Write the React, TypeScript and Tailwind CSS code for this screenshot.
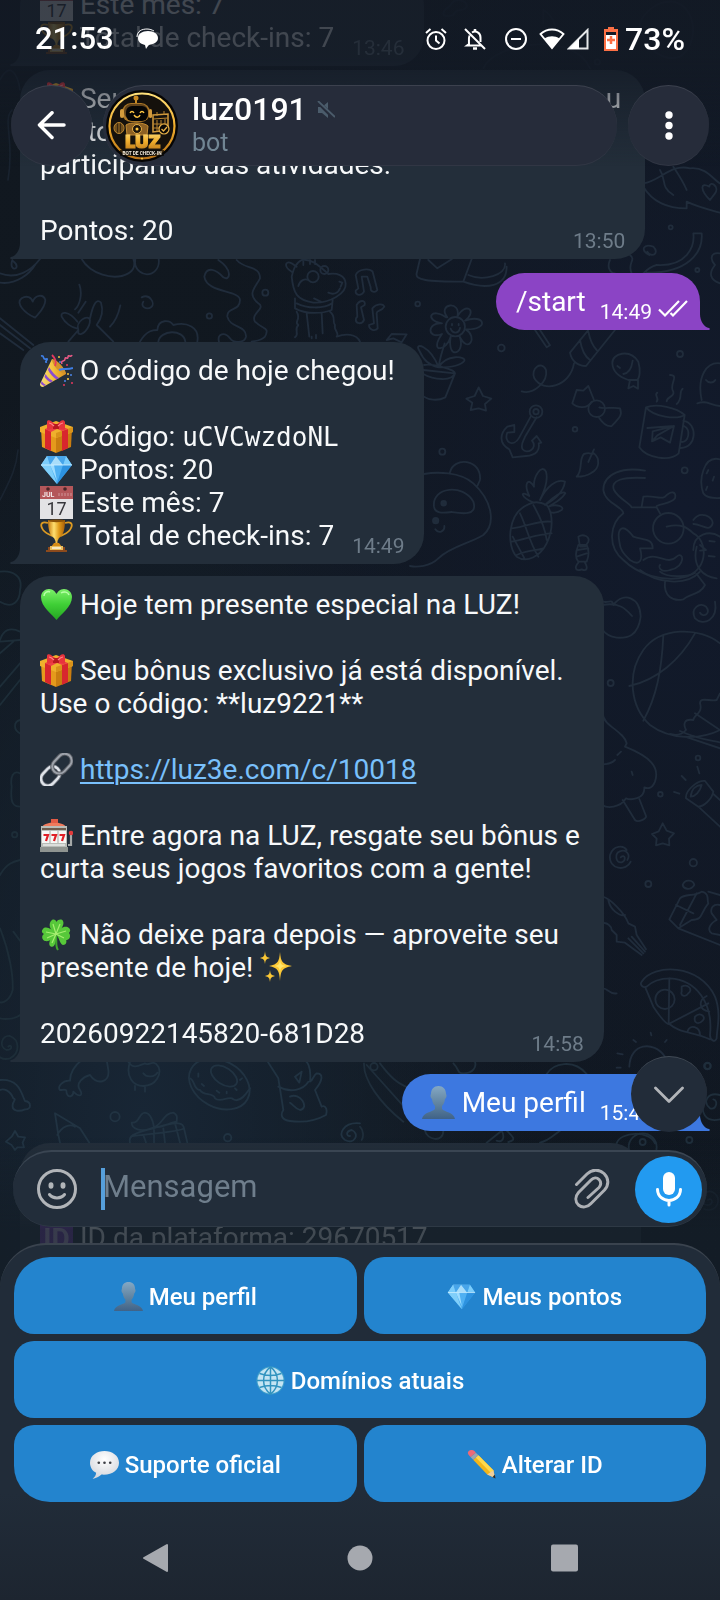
import type { ReactNode } from "react";

/* ---------- emoji drawings, all on a 33 x 33 grid ---------- */

type EmojiName =
  | "party" | "gift" | "gem" | "calendar" | "trophy" | "heart" | "link" | "slot"
  | "clover" | "sparkles" | "bust" | "globe" | "speech" | "pencil" | "id";

const drawings: Record<EmojiName, ReactNode> = {
  party: (
    <>
      <defs>
        <linearGradient id="pa" x1="0" x2="1"><stop offset="0" stopColor="#f9dc7c" /><stop offset=".5" stopColor="#f3c23c" /><stop offset="1" stopColor="#d98d1f" /></linearGradient>
      </defs>
      <path d="M12 5C18 7 25 14 26 20L3 33C1 33 0 32 0 30Z" fill="url(#pa)" />
      <path d="M9 13C12 18 16 22 19 24L16.500 25.500C13 23 10 20 8 16ZM5.500 20C8 24 11 26 13 27L10.500 28.500C8 27 6 25 4.500 23ZM1.500 27C3 29 4.500 30 6 31L4 32L1 30Z" fill="#8a4bd0" />
      <path d="M12 5C18 7 25 14 26 20C21 20 12 12 12 5Z" fill="#d3932a" />
      <path d="M15 12C17 8 15 4 12 1" fill="none" stroke="#e6395f" strokeWidth="1.800" />
      <path d="M19 16C23 14 28 16 33 14" fill="none" stroke="#3f7fe6" strokeWidth="2" />
      <path d="M1 2C5 1 2 6 6 5S3 9 7 8" fill="none" stroke="#3f7fe6" strokeWidth="1.600" />
      <path d="M22 10C20 6 25 8 25 5S28 6 28 3S31 4 32 1" fill="none" stroke="#e85a86" strokeWidth="1.600" />
      <g fill="#e6395f"><circle cx="27" cy="11" r="1" /><circle cx="32" cy="29" r="1" /><circle cx="24" cy="31" r="1" /></g>
      <g fill="#f3c23c"><circle cx="19" cy="3" r="1" /><circle cx="28" cy="20" r="1" /><circle cx="28" cy="25" r="1.100" /></g>
      <g fill="#4c86e8"><circle cx="20" cy="8" r=".9" /><circle cx="31" cy="21" r="1" /><circle cx="25" cy="27" r="1" /></g>
    </>
  ),
  gift: (
    <>
      <path d="M1 8L16 14V33L2 27Z" fill="#e59a1c" />
      <path d="M32 8L16 14V33L31 27Z" fill="#c97d10" />
      <path d="M0 7L16 1L33 7V12L16 18L0 12Z" fill="#efb02c" />
      <path d="M16 13L33 7V12L16 18Z" fill="#d8921a" />
      <path d="M5 9L11 11V31L5 28ZM22 11L28 9V28L22 31Z" fill="#d8262e" />
      <path d="M5 9L20 3L25 5L11 12ZM8 5L13 3L28 9L22 11Z" fill="#ee3f45" />
      <path d="M16 6C12 0 7 -1 7 2V9C8 11 13 8 16 7C19 8 24 11 25 9V2C24 -1 20 0 16 6Z" fill="#e8343c" />
      <path d="M13 4H19V9H13Z" fill="#b81820" />
      <path d="M9 3C11 3 13 5 14 6M23 3C21 3 19 5 18 6" stroke="#ff8587" fill="none" strokeWidth="1.200" />
    </>
  ),
  gem: (
    <>
      <defs><linearGradient id="ge" x1="0" y1="0" x2="1" y2="1"><stop offset="0" stopColor="#a9e2ff" /><stop offset=".5" stopColor="#4cb6f5" /><stop offset="1" stopColor="#1577cf" /></linearGradient></defs>
      <path d="M7 3H26L32 12L17 31L1 12Z" fill="url(#ge)" />
      <path d="M7 3L10 12H1ZM26 3L23 12H32Z" fill="#7ccdfb" />
      <path d="M10 12L16 3L23 12Z" fill="#a9ddfa" />
      <path d="M7 3H16L10 12ZM26 3H16L23 12Z" fill="#48a5ea" />
      <path d="M10 12H23L17 31Z" fill="#4fb0f2" />
      <path d="M10 12L14 12L17 28Z" fill="#9ddcff" />
      <path d="M1 12L10 12L17 31Z" fill="#80cffa" />
      <path d="M23 12H32L17 31Z" fill="#2d92e0" />
      <path d="M1 12H32" stroke="#d7f3ff" strokeWidth=".8" />
    </>
  ),
  calendar: (
    <>
      <path d="M0 0H33V33H0Z" fill="#e3e3e5" />
      <path d="M0 0H33V13H0Z" fill="#b4575a" />
      <circle cx="8" cy="3" r="1.800" fill="#4a2528" /><circle cx="25" cy="3" r="1.800" fill="#4a2528" />
      <text x="2" y="11" fontSize="7" fontWeight="700" fill="#f3e8e8" fontFamily="Roboto, sans-serif">JUL</text>
      <path d="M19 10V7M22 10V7M25 10V7M28 10V7M31 10V7" stroke="#d09698" strokeWidth="1" />
      <text x="16.500" y="29" fontSize="18" textAnchor="middle" fill="#36363a" fontFamily="Roboto, sans-serif">17</text>
    </>
  ),
  trophy: (
    <>
      <defs><linearGradient id="tr"><stop offset="0" stopColor="#c77a10" /><stop offset=".35" stopColor="#ffdf70" /><stop offset=".65" stopColor="#e09a1a" /><stop offset="1" stopColor="#a85e08" /></linearGradient></defs>
      <path d="M8 4C2 2 0 5 2 9C4 14 9 15 12 17M25 4C31 2 33 5 31 9C29 14 24 15 21 17" fill="none" stroke="#dc9a22" strokeWidth="1.800" />
      <path d="M8 1H25C25 11 23 17 19 19L17.500 22V26H15.500V22L14 19C10 17 8 11 8 1Z" fill="url(#tr)" />
      <ellipse cx="16.500" cy="1.800" rx="8.500" ry="1.400" fill="#8b5208" />
      <path d="M14 24H19L22 28H11Z" fill="#d58b16" />
      <path d="M8 28H25V31H27V33H6V31H8Z" fill="#8c4a1c" />
      <path d="M10 27H23V31H10Z" fill="#e9bd5c" /><path d="M12 28H21V30H12Z" fill="#f6e6bd" />
    </>
  ),
  heart: (
    <>
      <defs><linearGradient id="he" x1="0" y1="0" x2="0" y2="1"><stop offset="0" stopColor="#7df06a" /><stop offset=".5" stopColor="#3fcf36" /><stop offset="1" stopColor="#24a522" /></linearGradient></defs>
      <path d="M16.500 32C12 26 1 19 1 9C1 4 5 1 9 1C13 1 15.500 4 16.500 6C17.500 4 20 1 24 1C28 1 32 4 32 9C32 19 21 26 16.500 32Z" fill="url(#he)" />
      <path d="M4 8C4 4 8 3 10 4M21 5C24 3 28 4 29 7" stroke="#b8ffa8" strokeWidth="1.500" fill="none" />
    </>
  ),
  link: (
    <g fill="none" transform="rotate(-47 16.500 16.500)">
      <rect x="-3" y="9.500" width="21" height="14" rx="7" stroke="#6d737c" strokeWidth="4" />
      <rect x="-3" y="9.500" width="21" height="14" rx="7" stroke="#e0e4ea" strokeWidth="2.400" />
      <rect x="13.500" y="9.500" width="22" height="14" rx="7" stroke="#54585f" strokeWidth="4" />
      <rect x="13.500" y="9.500" width="22" height="14" rx="7" stroke="#9da2aa" strokeWidth="2" />
    </g>
  ),
  slot: (
    <>
      <path d="M2 8C5 2 23 2 26 8Z" fill="#ef7a5c" />
      <path d="M11 0H18V4H11Z" fill="#e25b45" />
      <path d="M1 7H27V29H1Z" fill="#b9bdb8" />
      <path d="M0 28H28V33H0Z" fill="#8f9490" />
      <path d="M2 9H26V11H2Z" fill="#6d5b4c" />
      <path d="M2 12H26V24H2Z" fill="#f6f6f4" />
      <path d="M10 12V24M18 12V24" stroke="#a9a9a5" />
      <path d="M3.500 16H8L6 22M11.500 16H16L14 22M19.500 16H24L22 22" stroke="#e01f26" strokeWidth="2.200" fill="none" />
      <path d="M3 26H25" stroke="#e9ebe8" strokeWidth="1.500" />
      <path d="M28 26H31V14" stroke="#a5a9a8" strokeWidth="2.200" fill="none" />
      <circle cx="31" cy="14" r="2.300" fill="#e23b3b" />
    </>
  ),
  clover: (
    <>
      <path d="M16 16C17 22 15 28 18 32" stroke="#3ea52c" strokeWidth="2" fill="none" />
      <g fill="#57c83a">
        <path d="M16 16C9 12 8 5 12 2C14 1 16 2 16.500 4C18 1 22 1 23 3C25 7 20 13 16 16Z" />
        <path d="M16 16C20 9 26 7 29 10C31 12 30 14 29 15C31 18 30 21 27 22C23 23 18 20 16 16Z" />
        <path d="M16 16C12 10 5 8 3 11C1 13 2 15 4 16C1 18 2 22 5 23C10 24 14 20 16 16Z" />
        <path d="M16 16C10 19 8 26 10 28C13 30 14 28 15 26C16 23 16 19 16 16ZM17 17C19 20 20 26 23 27C26 27 27 24 26 22C24 19 20 18 17 17Z" />
      </g>
      <path d="M16 16L13 6M16 16L20 6M16 16L26 13M16 16L6 14M16 16L7 20M16 16L12 25M16 16L24 20" stroke="#a5ee70" strokeWidth="1.200" />
    </>
  ),
  sparkles: (
    <g fill="#fbc735">
      <path d="M20 1C21 11 22 13 32 15C22 17 21 19 20 30C19 19 18 17 9 15C18 13 19 11 20 1Z" />
      <path d="M5 0C5.500 5 6 6 10 7C6 8 5.500 9 5 13C4.500 9 4 8 0 7C4 6 4.500 5 5 0ZM10 19C10.500 23 11 24 15 25C11 26 10.500 27 10 31C9.500 27 9 26 5 25C9 24 9.500 23 10 19Z" />
      <path d="M20 8C20.500 13 21 14 26 15C21 16 20.500 17 20 22C19.500 17 19 16 15 15C19 14 19.500 13 20 8Z" fill="#ffe66b" />
    </g>
  ),
  bust: (
    <>
      <defs><linearGradient id="bu" x1="0" y1="0" x2="0" y2="1"><stop offset="0" stopColor="#84a8c4" /><stop offset=".6" stopColor="#5c7f9c" /><stop offset="1" stopColor="#3f6288" /></linearGradient></defs>
      <path d="M16.500 0C12 0 9 3 9 8C8 9 8.500 12 10 13C10.500 17 12 19 13 20V23C11 26 1 26 0 33H33C32 26 22 26 20 23V20C21 19 22.500 17 23 13C24.500 12 25 9 24 8C24 3 21 0 16.500 0Z" fill="url(#bu)" />
    </>
  ),
  globe: (
    <>
      <circle cx="16.500" cy="16.500" r="16" fill="#3f9fca" />
      <circle cx="16.500" cy="16.500" r="14.800" fill="#c3e4f3" />
      <path d="M16.500 1V32M1 16.500H32M4 8.500Q16.500 13 29 8.500M4 24.500Q16.500 20 29 24.500M16.500 1C6 9 6 24 16.500 32C27 24 27 9 16.500 1" fill="none" stroke="#3193bf" strokeWidth="1.700" />
    </>
  ),
  speech: (
    <>
      <defs><radialGradient id="sp" cx=".5" cy=".3" r=".7"><stop offset="0" stopColor="#fff" /><stop offset="1" stopColor="#d3d6dc" /></radialGradient></defs>
      <path d="M16.500 1C8 1 0 6 0 14.500C0 20 3 24 7 26C7 29 5 31 3 33C8 32 11 30 13 28C25 29 33 23 33 14.500C33 6 25 1 16.500 1Z" fill="url(#sp)" />
      <g fill="#3d3f45"><circle cx="10" cy="14.500" r="1.500" /><circle cx="16.500" cy="14.500" r="1.500" /><circle cx="23" cy="14.500" r="1.500" /></g>
    </>
  ),
  pencil: (
    <>
      <path d="M7 11L13 6L30 23L32 32L23 28Z" fill="#f2b61c" />
      <path d="M10 8.500L13 6L30 23L27 26Z" fill="#ffd94e" />
      <path d="M23 28L30 23L32 32Z" fill="#efcf9d" />
      <path d="M29 31L31.500 28L32.500 32.500Z" fill="#2c2c2e" />
      <path d="M4 8L10 3L13 6L7 11Z" fill="#9fa4ab" />
      <path d="M4 8C1 5 0 3 2 1C5 -1 8 0 10 3Z" fill="#ec6a78" />
    </>
  ),
  id: (
    <>
      <rect width="33" height="33" rx="4" fill="#7b3fb4" />
      <text x="16.500" y="27" fontSize="28" fontWeight="700" textAnchor="middle" fill="#c5aedb" fontFamily="Roboto, sans-serif">ID</text>
    </>
  ),
};

function Emoji({ name, small = false }: { name: EmojiName; small?: boolean }) {
  return (
    <svg viewBox="0 0 33 33" aria-hidden="true" className={small ? "inline-block size-[29px] shrink-0" : "inline-block size-[33px] align-top"}>
      {drawings[name]}
    </svg>
  );
}

/* ---------- wallpaper ---------- */

const star = "M0 -12L4 -4L12 -3L6 3L8 11L0 7L-8 11L-6 3L-12 -3L-4 -4Z";
const swirl = "M0 0C4 -3 6 3 1 5C-5 6 -8 -1 -4 -6C2 -12 11 -6 10 2C9 8 3 12 -4 9";

function Wallpaper() {
  return (
    <svg
      viewBox="0 0 720 1600"
      preserveAspectRatio="xMidYMin slice"
      aria-hidden="true"
      className="h-full w-full text-[#202c3b] [grid-area:1/1]"
      fill="none"
      stroke="currentColor"
      strokeLinecap="round"
      strokeLinejoin="round"
      strokeWidth="5.500"
    >
      <g transform="translate(410 320) scale(.33333)">
        <path d="M112 -8C80 -50 155 -60 142 -10C165 -55 205 -30 165 2C225 -20 240 30 167 28C205 50 175 105 148 48C170 100 110 125 122 50C110 95 55 100 96 42C50 60 50 5 96 10C40 0 65 -40 108 -8" />
        <circle cx="136" cy="20" r="29" /><path d="M122 26C128 42 146 42 150 24M126 12V16M146 12V16" />
        <path d="M104 70C95 100 88 120 86 142M86 142C60 75 10 65 28 92C40 120 60 138 86 142C110 100 170 110 163 122C150 140 110 142 86 142M40 150L135 160L106 232C80 245 55 238 42 230M42 135C70 130 140 150 134 160C128 185 70 180 40 162" />
        <path d="M206 202L219 228L244 236L225 252L228 272L206 265L182 270L187 248L169 236L194 228Z" />
        <circle cx="274" cy="84" r="10" /><circle cx="97" cy="395" r="9" /><circle cx="495" cy="328" r="7" /><circle cx="824" cy="451" r="9" /><circle cx="810" cy="102" r="9" />
        <path d="M375 30L410 82L420 76L390 30M535 30L480 98C485 125 505 138 528 138L615 30M510 60C515 90 525 110 540 120M535 35C540 60 550 80 560 90M492 130C480 200 400 220 373 175C360 145 395 120 408 150C415 185 370 225 335 214" />
        <path d="M607 130C605 100 660 85 685 125C692 150 690 175 680 180H655C625 170 608 155 607 130ZM668 122C665 145 655 160 640 162M660 180L655 205L670 198L684 206V180M622 138L630 144" />
        <path d="M545 245C530 270 500 262 487 250L500 210L520 212L535 198L552 240M568 262C580 268 610 260 630 265C640 290 620 300 605 318C590 322 575 305 565 290" /><circle cx="560" cy="266" r="25" />
        <circle cx="378" cy="275" r="19" /><circle cx="378" cy="275" r="8" />
        <path d="M362 290L328 352C310 385 280 365 292 338L313 336V315L292 320C270 340 265 370 298 388L308 412L348 408C380 405 390 390 386 370L394 368L380 348L366 362C385 385 350 405 338 388C330 375 340 365 345 350L380 292" />
        <path d="M708 262L688 382C710 415 780 425 806 400L824 285C800 262 740 250 708 262C730 290 800 300 824 285M820 302C865 310 860 385 812 384M822 318C845 330 835 365 816 366M712 324L792 318L780 368L752 352L726 364L728 334L792 318L742 346L726 364M742 218C730 225 750 235 740 245M780 165C810 165 775 195 790 215C795 230 770 230 770 244M818 206C805 215 820 235 800 252" />
        <path d="M500 470C520 450 505 420 522 402C545 395 540 405 552 400C570 415 570 445 545 458C530 468 520 470 500 470ZM552 388L535 426" />
        <path d="M42 462C80 455 150 455 190 490C245 540 260 610 220 645C180 670 120 680 85 715C60 740 20 742 0 738M120 457C130 410 215 415 210 480L202 498M72 560C65 500 160 490 190 545C205 590 150 580 125 576C95 580 75 580 72 560ZM76 628C85 642 105 635 103 618" />
        <circle cx="101" cy="550" r="7" fill="currentColor" /><circle cx="77" cy="602" r="8" fill="currentColor" />
        <path d="M355 553C290 580 290 680 320 710C350 730 390 710 410 670C430 630 430 580 410 555C390 545 370 545 355 553ZM305 625C350 620 390 600 422 605M305 665C340 660 390 640 425 640M320 705C350 690 390 690 400 685M330 580C350 620 355 660 385 710M370 555C390 590 405 620 410 660M308 650L345 718M370 548C330 530 330 510 358 528C340 490 355 470 372 500C370 470 395 430 408 455C415 480 405 510 390 540C410 500 440 475 465 485C460 520 430 540 405 555C430 530 460 510 466 520C450 545 430 550 415 560C440 550 465 560 455 570C440 580 425 580 420 575" />
        <path d="M505 650C520 640 540 650 535 665L525 680H510ZM505 675C495 700 495 715 505 725H530C540 700 535 685 530 675ZM502 690L535 685M500 710L530 700M505 728C490 745 500 755 515 748C530 755 535 745 525 728" />
        <path d="M705 452C640 440 580 460 580 510C585 550 640 560 640 580C600 610 590 680 640 720C680 760 760 790 830 770C900 740 890 660 850 640C830 620 810 610 770 620M705 474C640 470 600 480 612 510C625 535 660 550 665 562H740L750 580M695 560L700 530C730 525 750 540 765 530C785 510 800 515 795 535C785 550 760 550 740 558M628 665C620 620 640 610 670 650C700 660 730 655 728 685H690C700 720 690 740 660 720C640 700 630 690 628 665ZM700 720C740 690 770 740 800 710C820 690 830 740 780 750C750 760 745 740 750 735" />
        <circle cx="775" cy="625" r="46" />
        <path d="M875 240C860 170 890 125 930 130M888 180C895 190 910 190 916 180M862 250C890 240 900 255 930 258M930 418C880 405 865 480 880 520C890 535 910 535 930 534M895 450L890 460M912 470L908 482M892 500L888 510" />
        <path d="M850 690C850 640 900 630 930 650M860 680C845 740 880 770 920 775M870 675L888 690L870 692M898 663L914 665M896 708L914 710M850 600C870 570 910 590 908 610C900 640 870 610 850 612" />
      </g>
      <g transform="translate(0 250) scale(.33333)">
        <path d="M105 203C75 190 45 160 65 145C80 135 95 142 98 155C105 135 130 130 136 150C136 175 115 190 105 203ZM238 104C248 130 240 165 225 178M257 155L235 188M361 166C355 195 345 215 330 230M0 70C50 90 95 60 120 27M0 98C50 105 90 70 105 45M245 27C270 70 340 95 385 70C405 60 405 40 400 27M406 27C400 60 430 80 455 70C475 60 478 40 476 27M37 30C30 50 40 60 48 54C54 46 45 38 40 34M0 205L100 285M0 225L90 295M0 250L70 300M425 142C450 130 465 160 455 170C440 182 420 170 430 155" />
        <path d="M232 215C205 180 180 185 185 200C195 220 215 232 230 235M270 205C280 160 290 145 303 158C310 180 305 205 290 225L340 275M235 240C225 215 265 190 270 210C270 235 245 260 235 250ZM235 240L205 275" />
        <path d="M655 30C700 60 690 95 670 82C650 60 620 45 613 80C620 130 720 120 720 150C720 185 680 170 682 200C690 235 740 225 738 260C735 280 700 280 690 265C675 245 650 250 657 275M710 30C735 60 780 45 780 85C765 115 740 130 775 160C800 175 750 190 765 215C790 240 810 230 795 260C780 275 765 272 755 275M420 275C440 240 460 240 472 240C475 205 510 210 520 225C560 215 600 230 592 275M475 275C480 240 550 235 556 275" />
        <circle cx="628" cy="198" r="8" /><circle cx="796" cy="128" r="9" /><circle cx="1253" cy="162" r="7" />
        <path d="M875 80C880 130 890 150 940 158C990 160 1040 130 1037 100C1035 75 1010 68 985 72C950 40 930 25 905 30C885 40 880 60 875 80ZM875 65C850 50 855 30 875 40L890 50M885 145V175C920 195 970 190 995 180L998 150M890 160C920 175 970 178 996 160M890 185C905 210 880 215 895 225C880 240 900 250 885 262M990 185C1010 200 995 215 1005 225C1000 240 1020 250 1010 260C1035 250 1070 250 1080 275M920 190L928 260M965 190L968 250M895 108C900 90 915 85 925 90M985 128C1000 135 1015 130 1020 115M1018 95L1027 98L1022 110M942 145L962 155M935 260V265M948 255V265M910 30V45M930 30V42M945 30V42" />
        <circle cx="939" cy="80" r="17" /><circle cx="973" cy="60" r="12" />
        <path d="M1075 115L1067 75C1075 55 1110 55 1118 65L1132 120C1125 130 1110 125 1112 112L1102 80H1085L1092 125C1085 138 1065 138 1067 122ZM1072 200L1070 165C1080 148 1098 150 1094 165L1083 172L1092 210C1085 225 1065 222 1068 205ZM1122 220L1117 175C1130 160 1150 160 1153 170C1145 185 1130 180 1130 190L1133 235C1125 245 1107 240 1107 225Z" />
        <path d="M1160 270L1175 252L1220 253L1205 277L1180 265Z" />
      </g>
      <g transform="translate(360 0) scale(.33333)">
        <path d="M180 777L170 820C165 840 200 845 310 845L335 777M205 780L232 805L275 778M325 825C370 845 440 825 435 790M310 845C380 870 440 860 440 800M750 780C740 800 750 820 765 820M810 765C830 780 800 790 815 820M868 765C840 750 850 730 880 740C900 760 875 775 862 755M1000 700H1025C1030 760 980 820 860 818M1000 700C1005 740 980 800 890 795C870 800 860 810 850 820" />
        <path d="M850 550C900 545 930 490 990 505C1040 500 1060 540 1080 550M850 560C880 610 930 625 980 625V605C1010 620 1050 630 1080 638M900 510C920 540 900 560 940 585M940 500C960 530 970 545 980 570M1050 600C1020 570 1020 545 1048 560C1050 540 1080 560 1065 580Z" />
        <path d="M250 40C255 20 270 25 275 10C290 -10 325 5 320 20C310 40 290 20 280 45C265 50 250 50 250 40ZM550 70V30C570 40 580 60 585 75M370 205C400 130 640 90 690 205M840 70C850 40 890 0 940 5C1010 20 1020 130 960 170C900 190 845 130 840 70Z" opacity=".5" />
        <path d="M1080 760C1050 755 1050 780 1065 795C1045 820 1050 840 1080 850" />
        <circle cx="932" cy="682" r="6" /><circle cx="1012" cy="810" r="6" /><circle cx="712" cy="186" r="8" opacity=".5" />
      </g>
      <g transform="translate(600 570) scale(.33333)">
        <path d="M120 0C170 40 260 50 300 5M195 35C190 80 220 95 250 88C270 70 300 75 315 45L290 12M180 5C200 25 270 20 285 8M8 95C30 100 35 85 40 105C70 65 120 80 122 140C115 200 80 205 50 203C30 200 15 190 8 180M8 105C60 95 80 120 96 138M345 95C355 150 310 170 285 145C270 115 300 95 318 110C335 130 310 145 300 128" />
        <path d="M360 220C300 170 180 170 130 240C80 310 90 410 150 465C210 510 300 510 360 480M190 197C185 300 170 380 130 452M285 190C240 270 170 330 88 348M240 483C300 510 330 510 360 517M360 370L350 390C330 395 300 380 300 400C310 430 280 435 280 450C250 445 250 465 258 480C240 500 220 495 210 492M285 430L360 480M255 500L360 535" />
        <path d="M8 430C10 470 70 480 80 520L75 530C150 560 180 590 165 635C155 660 140 655 133 652C135 690 90 690 78 685C60 715 20 715 8 705M8 583C25 583 35 580 45 570M52 555L63 545M95 605L98 615M68 690L105 750C115 760 140 745 138 738L118 687" />
        <path d="M258 685C255 660 295 630 315 633L340 665C335 690 310 710 295 710ZM272 680C275 655 290 645 305 645C300 665 285 680 272 680ZM295 710L360 770M340 672L360 690M292 590L298 610M245 618L257 630M222 666L238 671" />
        <path d="M188 760L200 782L222 790L207 806L208 826L188 820L168 826L170 806L156 792L176 784ZM62 862C75 850 80 870 65 877C45 880 45 850 58 845C80 835 92 855 82 870M92 875C80 905 25 900 30 855C40 825 70 825 80 840" />
        <circle cx="32" cy="339" r="9" /><circle cx="294" cy="564" r="7" /><circle cx="181" cy="673" r="7" /><circle cx="280" cy="878" r="11" /><circle cx="145" cy="942" r="9" /><circle cx="322" cy="1488" r="10" />
        <path d="M8 980C30 985 75 1030 85 1060L105 1070L110 1095M25 990C30 1020 60 1040 75 1035M8 1060C20 1055 35 1070 35 1080L50 1095V1115L75 1118L125 1155M110 1095L138 1138M85 1105L130 1150M95 1100L135 1145M8 1255C25 1255 30 1275 50 1270" />
        <path d="M208 1048L240 985C255 970 280 980 305 965C330 970 320 990 325 1000C300 1030 310 1050 275 1050L235 1075ZM235 1075L360 1125M325 965L360 975M290 970L240 1065M228 1005L280 1030M248 945C255 925 280 930 283 945C270 965 250 955 248 945ZM360 1005C340 1000 330 1015 335 1030L350 1050C330 1060 320 1080 335 1090L360 1095" />
        <path d="M125 1235C160 1180 300 1180 345 1280C365 1330 350 1380 350 1405C345 1420 330 1410 330 1395C340 1300 290 1230 210 1225C170 1225 150 1240 140 1250C130 1255 118 1245 125 1235ZM137 1255L160 1310C180 1340 200 1365 208 1362C240 1390 280 1385 330 1408M208 1225L206 1362L325 1300M245 1250C265 1240 280 1260 265 1270C255 1285 240 1275 245 1265ZM285 1340C300 1325 320 1340 308 1352C295 1365 280 1360 285 1340Z" />
        <circle cx="195" cy="1288" r="29" /><path d="M320 1278C295 1290 295 1320 328 1325M262 1385C270 1360 300 1370 300 1395M88 1490C90 1420 160 1410 195 1460M100 1410L108 1416M152 1388L154 1396M200 1410L195 1416M52 1450L68 1453M50 1493H62" />
      </g>
      <g transform="translate(0 570) scale(.33333)" stroke="#1d2d38">
        <path d="M0 95C40 120 60 90 60 60C70 20 40 0 0 5M0 210C10 180 30 170 60 185M0 215L60 210M0 350L60 280M0 405L60 330M0 250L40 215M60 450C40 455 40 480 60 490M60 610C40 600 30 620 35 650C30 700 40 710 60 710M0 915C20 880 40 875 60 870M0 1075C30 1150 40 1220 38 1260C30 1290 10 1300 0 1297M40 1085L60 1112M0 1345C20 1350 50 1345 60 1335M25 1430C35 1420 40 1440 20 1440C-5 1430 5 1395 30 1398C60 1410 60 1450 30 1465C15 1470 5 1465 0 1462" />
        <circle cx="44" cy="794" r="8" />
      </g>
      <g transform="translate(0 1060) scale(.33333)" stroke="#213342">
        <path d="M0 60C60 55 65 105 75 123C95 125 95 150 75 148C60 155 35 155 38 135C40 120 50 120 40 115C30 90 10 85 0 90M245 0C220 20 210 40 210 62C190 60 170 80 180 90C195 90 200 85 200 100C205 115 220 110 220 95C240 115 250 105 240 90C225 70 250 50 270 45C290 75 330 70 325 30L320 0M390 5C375 50 400 78 430 78C470 78 485 40 475 20C460 -5 445 20 435 10C420 15 400 30 385 5M405 78V90M435 78V95M430 40C440 55 465 50 472 38" />
        <ellipse cx="658" cy="72" rx="96" ry="70" transform="rotate(28 658 72)" /><ellipse cx="672" cy="48" rx="44" ry="25" transform="rotate(33 672 48)" />
        <path d="M570 55C585 60 580 90 600 90C610 110 640 95 645 115C660 130 690 105 700 118C720 130 740 100 750 85M595 40V50M605 72L612 78M650 92L658 98M680 95V100M705 85L710 90M720 60L726 55M800 0L835 55L850 150C840 165 845 180 870 183C920 190 960 175 978 165C985 140 970 135 965 140L945 90C970 60 970 40 950 40C940 45 940 60 930 65C935 20 920 0 910 0M835 80C870 100 910 90 925 65M870 110C900 95 930 145 900 150C885 145 880 135 870 128M885 50L905 35L898 68Z" />
        <path d="M165 160L175 225L180 248M165 160L240 205L268 248M172 225C185 200 210 190 225 200M45 213L55 230L75 232L68 248L72 262L52 262L45 270L35 255L18 245L35 230ZM390 248C385 230 395 220 460 205C540 180 550 190 552 205L562 248M462 202C420 220 395 205 395 188C420 190 415 160 435 158C455 160 460 190 462 202C490 190 490 160 520 158C535 165 530 175 530 185C510 185 490 205 462 202M398 228C460 220 540 215 552 205M430 225L438 248M462 210V248M490 205L495 248M525 190L540 248M1080 190C1030 185 1010 225 1035 240C1065 255 1080 220 1055 210C1035 215 1040 230 1050 228" />
        <circle cx="345" cy="170" r="14" /><circle cx="683" cy="233" r="11" />
      </g>
      <g transform="translate(360 1060) scale(.33333)" stroke="#1f2e3b">
        <path d="M12 10C10 60 60 130 130 185M20 15L145 155M60 10C90 50 110 70 150 85M280 10C300 30 290 40 310 40C340 40 350 20 345 5M560 42C580 10 640 -5 680 42M195 212C200 240 250 250 250 212M380 248L425 212C435 230 430 250 410 242M440 212C460 230 470 240 445 246M540 248C570 240 580 225 600 212M0 200C10 210 12 230 5 240M770 250C780 215 870 210 885 250M1060 118C1075 120 1070 150 1050 145C1025 125 1045 95 1080 105M1080 178C1030 190 1025 150 1030 130" />
        <circle cx="42" cy="20" r="11" /><circle cx="848" cy="262" r="42" /><circle cx="848" cy="246" r="9" /><circle cx="988" cy="240" r="9" /><circle cx="1043" cy="18" r="9" />
      </g>
      <g strokeWidth="1.600" opacity=".6">
        <path d="M0 80C10 60 18 75 20 90M8 180C15 140 2 120 12 110M0 500C10 480 16 470 18 450" />
        <path d={star} transform="translate(8 1310)" />
        <path d={swirl} transform="translate(708 1200)" />
      </g>
    </svg>
  );
}

/* ---------- messages ---------- */

function Tail({ side }: { side: "left" | "right" }) {
  return (
    <svg
      viewBox="0 0 14 16"
      aria-hidden="true"
      className={side === "left" ? "absolute bottom-0 -left-2.5 h-4 w-3.5" : "absolute -right-2.5 bottom-0 h-4 w-3.5 -scale-x-100"}
    >
      <path d="M10 0C10 7 6 13 1 14C-.5 14.500 0 16 2 16H14V0Z" fill="currentColor" />
    </svg>
  );
}

function Incoming({ lines, last, time, className = "" }: { lines: ReactNode[]; last: ReactNode; time: string; className?: string }) {
  return (
    <article className={`relative ml-5 max-w-[660px] self-start rounded-[30px] rounded-bl-none bg-[#232e3a] px-5 py-3 text-[#232e3a] ${className}`}>
      <Tail side="left" />
      <div className="text-[28px] leading-[33px] text-[#f7f9fa]">
        {lines.map((line, i) => (
          <p key={i} className="min-h-[33px] pr-1">{line}</p>
        ))}
        <div className="flex items-end justify-between gap-[18px]">
          <p className="min-h-[33px]">{last}</p>
          <time className="-mb-1.5 text-[21px] leading-6 text-[#6e7c89]">{time}</time>
        </div>
      </div>
    </article>
  );
}

function Outgoing({ children, time, className }: { children: ReactNode; time: string; className: string }) {
  return (
    <article className={`relative mr-5 flex items-end self-end rounded-[30px] rounded-br-none py-3 pr-3 pl-5 ${className}`}>
      <Tail side="right" />
      <p className="text-[28px] leading-[33px] text-white">{children}</p>
      <time className="-mb-1.5 ml-3.5 text-[21px] leading-6 text-white">{time}</time>
      <svg viewBox="0 0 30 18" aria-hidden="true" className="ml-1.5 h-[18px] w-[30px]" fill="none" stroke="#fff" strokeWidth="2.200">
        <path d="M1 9.500L7 15.500L21 1M12.500 13L15 15.500L29 1" />
      </svg>
    </article>
  );
}

function Messages() {
  return (
    <main className="flex min-h-0 min-w-0 flex-col justify-end overflow-hidden pb-[301px] [grid-area:1/1]">
      <Incoming
        className="mb-1"
        lines={[<><Emoji name="calendar" /> Este mês: 7</>]}
        last={<><Emoji name="trophy" /> Total de check-ins: 7</>}
        time="13:46"
      />
      <Incoming
        className="mb-3.5"
        lines={[
          <><Emoji name="gift" /> Seu código de hoje já chegou. Você ganhou</>,
          "pontos por continuar",
          "participando das atividades.",
          "",
        ]}
        last="Pontos: 20"
        time="13:50"
      />
      <Outgoing time="14:49" className="mb-3 bg-[#8b44c5] text-[#8b44c5]">/start</Outgoing>
      <Incoming
        className="mb-3"
        lines={[
          <><Emoji name="party" /> O código de hoje chegou!</>,
          "",
          <><Emoji name="gift" /> Código: <code className="font-['DejaVu_Sans_Mono',monospace] text-[26px] leading-none">uCVCwzdoNL</code></>,
          <><Emoji name="gem" /> Pontos: 20</>,
          <><Emoji name="calendar" /> Este mês: 7</>,
        ]}
        last={<><Emoji name="trophy" /> Total de check-ins: 7</>}
        time="14:49"
      />
      <Incoming
        className="mb-3"
        lines={[
          <><Emoji name="heart" /> Hoje tem presente especial na LUZ!</>,
          "",
          <><Emoji name="gift" /> Seu bônus exclusivo já está disponível.</>,
          "Use o código: **luz9221**",
          "",
          <><Emoji name="link" /> <a href="https://luz3e.com/c/10018" className="text-[#79c0fb] underline decoration-2 underline-offset-[3px]">https://luz3e.com/c/10018</a></>,
          "",
          <><Emoji name="slot" /> Entre agora na LUZ, resgate seu bônus e</>,
          "curta seus jogos favoritos com a gente!",
          "",
          <><Emoji name="clover" /> Não deixe para depois — aproveite seu</>,
          <>presente de hoje! <Emoji name="sparkles" /></>,
          "",
        ]}
        last="20260922145820-681D28"
        time="14:58"
      />
      <Outgoing time="15:49" className="mb-3 bg-[#3d78e0] text-[#3d78e0]"><Emoji name="bust" /> Meu perfil</Outgoing>
      <Incoming
        className="w-[621px]"
        lines={["", "", <><Emoji name="id" /> ID da plataforma: 29670517</>]}
        last=""
        time=""
      />
    </main>
  );
}

/* ---------- top bars ---------- */

function StatusBar() {
  return (
    <div className="flex h-[78px] items-center pr-[35px] pl-[35px] text-[32px] font-medium text-white">
      <span className="text-[31px]">21:53</span>
      <svg viewBox="0 0 22 22" className="ml-[22px] size-[22px]" aria-label="Mensagens">
        <path d="M1 9C1 3 6 1 11 1C14 1 16 2 18 3" stroke="#fff" fill="none" strokeWidth="1" />
        <path d="M12 3C6 3 2 6 2 10C2 14 5 16 9 17L10 21C11 19 12 18 13 17C18 16 22 14 22 10C22 6 18 3 12 3Z" fill="#fff" />
      </svg>
      <div className="ml-auto flex items-center">
        <svg viewBox="0 0 22 22" className="mr-[17px] size-[22px]" fill="none" stroke="#fff" strokeWidth="2" aria-label="Alarme">
          <circle cx="11" cy="12.500" r="8.500" /><path d="M11 7.500V12.500L14.500 15.500M1 5L5.500 1M21 5L16.500 1" />
        </svg>
        <svg viewBox="0 0 22 22" className="mr-[19px] size-[22px]" fill="none" stroke="#fff" strokeWidth="2" aria-label="Silencioso">
          <path d="M1 1L21 21M5.500 7.500C4.500 10 5 13 5 16L3 17.500H17.500M8 4.500C12 2 16.500 5 16.500 9.500V14" /><path d="M11 1V4M9 20.500H13" strokeWidth="2.500" />
        </svg>
        <svg viewBox="0 0 22 22" className="mr-3 size-[22px]" fill="none" stroke="#fff" strokeWidth="2" aria-label="Não perturbe">
          <circle cx="11" cy="11" r="10" /><path d="M6 11H16" />
        </svg>
        <svg viewBox="0 0 26 22" className="mr-0.5 h-[22px] w-[26px]" aria-label="Wi-Fi">
          <path d="M1.500 6C8 0 18 0 24.500 6L13 20Z" fill="none" stroke="#fff" strokeWidth="1.800" /><path d="M5.500 10.500C10 7.500 16 7.500 20.500 10.500L13 20.500Z" fill="#fff" />
        </svg>
        <svg viewBox="0 0 22 22" className="mr-[15px] size-[22px]" aria-label="Sinal">
          <path d="M2 20.500L20.500 2V20.500Z" fill="none" stroke="#e6e8ea" strokeWidth="2" /><path d="M2 21L12 10.500V21Z" fill="#fff" />
        </svg>
        <svg viewBox="0 0 14 24" className="mr-[7px] h-6 w-3.5" aria-label="Bateria">
          <path d="M4 0H10V2H14V24H0V2H4Z" fill="#fb7045" /><path d="M2 5H12V8H2Z" fill="#131a25" /><path d="M2 8H12V22H2Z" fill="#fff" /><path d="M7 9V17M3 13H11" stroke="#fb7045" strokeWidth="2.500" />
        </svg>
        <span>73%</span>
      </div>
    </div>
  );
}

function Avatar() {
  return (
    <svg viewBox="0 0 72 72" className="size-[72px] shrink-0" role="img" aria-label="LUZ">
      <defs>
        <linearGradient id="gold" x1="0" y1="0" x2="0" y2="1"><stop offset="0" stopColor="#ffe07a" /><stop offset=".5" stopColor="#f0ad2c" /><stop offset="1" stopColor="#b8741a" /></linearGradient>
      </defs>
      <circle cx="36" cy="36" r="36" fill="#060504" />
      <circle cx="36" cy="36" r="32.500" fill="#15110c" stroke="url(#gold)" strokeWidth="2.200" />
      <circle cx="30" cy="8" r="2.500" fill="#c98a22" /><path d="M30 10V14" stroke="#c98a22" strokeWidth="2" />
      <rect x="16" y="13" width="28" height="19" rx="9" fill="#a97627" /><rect x="18" y="14" width="24" height="15" rx="7" fill="#60421b" />
      <rect x="20" y="16" width="22" height="15" rx="6" fill="#050505" />
      <path d="M24 23C25 21 27 21 28 23M34 23C35 21 37 21 38 23M28 25C30 28 33 28 34 25" fill="none" stroke="#ffc743" strokeWidth="1.400" />
      <rect x="14" y="19" width="4" height="9" rx="2" fill="#d29a3c" /><rect x="43" y="19" width="3" height="9" rx="1.500" fill="#d29a3c" />
      <path d="M20 35C24 32 38 32 42 36L41 45H21Z" fill="#8d6124" stroke="#c28b32" /><circle cx="31" cy="39" r="4.500" fill="#1b140b" stroke="#e9b248" /><circle cx="31" cy="39" r="1.500" fill="#ffc743" />
      <ellipse cx="13" cy="38" rx="5" ry="5.500" fill="#3a2810" stroke="#c28b32" /><path d="M10 34V42M13 33V43M16 34V42" stroke="#c28b32" strokeWidth=".8" />
      <path d="M47 25L62 24L62 40L47 42Z" fill="#15110c" stroke="#d29a3c" strokeWidth="1.500" />
      <path d="M47 29L62 28M51 30V41M55 30V41M59 29V40M47 34H62M47 38H60M51 22V26M58 21V25" stroke="#b98530" strokeWidth="1" />
      <circle cx="58" cy="39" r="5" fill="#0a0806" stroke="#e9b248" strokeWidth="1.200" /><path d="M55.500 39L57.500 41L61 37" stroke="#e9b248" strokeWidth="1.300" fill="none" />
      <text x="37" y="58" textAnchor="middle" fontFamily="Inter, Roboto, sans-serif" fontWeight="900" fontSize="18" fill="url(#gold)" stroke="url(#gold)" strokeWidth="1.200">LUZ</text>
      <path d="M14 60H58V66H14Z" fill="#0a0806" opacity=".7" />
      <text x="36" y="65" textAnchor="middle" fontFamily="Roboto, sans-serif" fontWeight="700" fontSize="4.800" fill="#f0e8da">BOT DE CHECK-IN</text>
      <circle cx="36" cy="68.500" r="1" fill="#ffc743" />
    </svg>
  );
}

const glass = "rounded-full border-t border-b border-t-white/10 border-b-white/5 bg-[#262c3a]";

function Header() {
  return (
    <header className="bg-linear-to-b from-[#131a25]/80 from-35% to-[#131a25]/0">
      <StatusBar />
      <div className="mt-[7px] flex h-[81px] items-center gap-[11px] px-[11px]">
        <button aria-label="Voltar" className={`flex size-[81px] shrink-0 items-center justify-center ${glass}`}>
          <svg viewBox="0 0 30 30" className="size-[30px] text-white" fill="none" stroke="currentColor" strokeWidth="3.500" strokeLinecap="round" strokeLinejoin="round"><path d="M27 14H3M15 1.800L2.500 14L15 26.500" /></svg>
        </button>
        <div className={`flex h-[81px] min-w-0 flex-1 items-center gap-3.5 pl-[3px] ${glass}`}>
          <Avatar />
          <div className="min-w-0">
            <h1 className="flex items-center gap-2.5 text-[32px] leading-[35px] font-medium text-white">
              luz0191
              <svg viewBox="0 0 18 18" className="size-[18px] text-[#4b5c6b]" aria-label="Silenciado"><path d="M1 6H5L11 1V17L5 12H1Z" fill="currentColor" /><path d="M0 0L17 17" stroke="#262c3a" strokeWidth="4" /><path d="M1 0L18 16" stroke="currentColor" strokeWidth="1.800" /></svg>
            </h1>
            <p className="text-[25px] leading-8 text-[#718593]">bot</p>
          </div>
        </div>
        <button aria-label="Mais opções" className={`flex size-[81px] shrink-0 items-center justify-center ${glass}`}>
          <svg viewBox="0 0 8 30" className="h-[30px] w-2" fill="#fff"><circle cx="4" cy="4" r="3.700" /><circle cx="4" cy="14.500" r="3.700" /><circle cx="4" cy="25" r="3.700" /></svg>
        </button>
      </div>
    </header>
  );
}

/* ---------- bottom bars ---------- */

function Composer() {
  return (
    <form className="mx-[13px] mb-4 flex h-[77px] items-center rounded-full border-t-2 border-b border-t-[#3a4552] border-b-[#2e3945] bg-[#222d3a] pr-[5px] pl-6">
      <button type="button" aria-label="Emojis" className="shrink-0">
        <svg viewBox="0 0 40 40" className="size-10" fill="none" stroke="#b2b5b9" strokeWidth="3" strokeLinecap="round">
          <circle cx="20" cy="20" r="18.500" /><path d="M12.500 25.500C16 30 24 30 27.500 25.500" />
          <ellipse cx="14" cy="16.500" rx="1" ry="1.800" /><ellipse cx="26" cy="16.500" rx="1" ry="1.800" />
        </svg>
      </button>
      <span aria-hidden="true" className="ml-6 h-[42px] w-1 shrink-0 bg-[#569fdb]" />
      <input aria-label="Mensagem" placeholder="Mensagem" className="-ml-0.5 h-[42px] min-w-0 flex-1 bg-transparent pb-1 text-[31px] text-white outline-none placeholder:text-[#6f7e8c]" />
      <button type="button" aria-label="Anexar" className="mr-[25px] shrink-0">
        <svg viewBox="0 0 36 40" className="h-10 w-9" fill="none" stroke="#adb0b5" strokeWidth="3" strokeLinecap="round" strokeLinejoin="round">
          <path d="M2.500 15.500L13 5C18 0 25 0 30 4.500C35 9.500 35 16 30.500 21L17 34.500C13.500 38.500 8 39 4.500 36C1 32.500 1 27.500 4.500 23.500L17 11C19.500 8.500 23 8.500 25 10.500C27.500 13 27 16.500 25 18.500L14 28.500" />
        </svg>
      </button>
      <button type="button" aria-label="Gravar áudio" className="flex size-[67px] shrink-0 items-center justify-center rounded-full bg-[#229af0]">
        <svg viewBox="0 0 26 35" className="h-[35px] w-[26px]" fill="none" stroke="#fff" strokeWidth="3" strokeLinecap="round">
          <rect x="7" y="0" width="12" height="23" rx="6" fill="#fff" stroke="none" /><path d="M1.500 17.500C2 32 24 32 24.500 17.500M13 29V33" />
        </svg>
      </button>
    </form>
  );
}

const key = "flex h-[77px] items-center justify-center gap-1.5 rounded-[20px] bg-[#2384ce] pt-0.5 text-[24px] font-medium text-white";

function Keyboard() {
  return (
    <div className="rounded-t-[46px] border-t-2 border-[#3a434e] bg-linear-to-b from-[#212c39] from-70% to-[#1d2530] px-3.5 pt-3">
      <div className="grid grid-cols-2 gap-[7px]">
        <button className={`${key} rounded-tl-[36px]`}><Emoji small name="bust" /> Meu perfil</button>
        <button className={`${key} rounded-tr-[36px]`}><Emoji small name="gem" /> Meus pontos</button>
        <button className={`${key} col-span-2`}><Emoji small name="globe" /> Domínios atuais</button>
        <button className={`${key} rounded-bl-[36px]`}><Emoji small name="speech" /> Suporte oficial</button>
        <button className={`${key} rounded-br-[36px]`}><Emoji small name="pencil" /> Alterar ID</button>
      </div>
      <nav className="flex h-[98px] items-center justify-center gap-[177px] pt-3.5">
        <button aria-label="Voltar"><svg viewBox="0 0 28 30" className="h-[30px] w-7"><path d="M26 2V28L3 15Z" fill="#a6a9af" stroke="#a6a9af" strokeWidth="2" strokeLinejoin="round" /></svg></button>
        <button aria-label="Início"><svg viewBox="0 0 28 30" className="h-[30px] w-7"><circle cx="14" cy="15" r="12.500" fill="#a6a9af" /></svg></button>
        <button aria-label="Recentes"><svg viewBox="0 0 28 30" className="h-[30px] w-7"><rect x="0" y="1.500" width="27" height="27" rx="2" fill="#a6a9af" /></svg></button>
      </nav>
    </div>
  );
}

export default function App() {
  return (
    <div className="grid h-screen grid-cols-1 grid-rows-1 overflow-hidden bg-[#121924] bg-[radial-gradient(ellipse_at_95%_32%,#121a2c_0%,transparent_50%),radial-gradient(ellipse_at_20%_70%,#182635_0%,transparent_48%),linear-gradient(#111820,#10171f)] font-['Roboto',sans-serif]">
      <Wallpaper />
      <Messages />
      <div className="z-10 flex min-w-0 flex-col justify-between [grid-area:1/1]">
        <Header />
        <footer className="flex flex-col">
          <button aria-label="Ir para o fim" className="mr-[13px] mb-1.5 flex size-[76px] items-center justify-center self-end rounded-full border-t border-t-white/15 bg-[#222c39]">
            <svg viewBox="0 0 30 18" className="h-[18px] w-[30px]" fill="none" stroke="#b2b5b9" strokeWidth="2.800" strokeLinecap="round" strokeLinejoin="round"><path d="M1.500 2L15 15.500L28.500 2" /></svg>
          </button>
          <div className="bg-linear-to-b from-[#141e28]/0 to-[#141e28]/80 to-20% pt-3">
            <Composer />
            <Keyboard />
          </div>
        </footer>
      </div>
    </div>
  );
}
